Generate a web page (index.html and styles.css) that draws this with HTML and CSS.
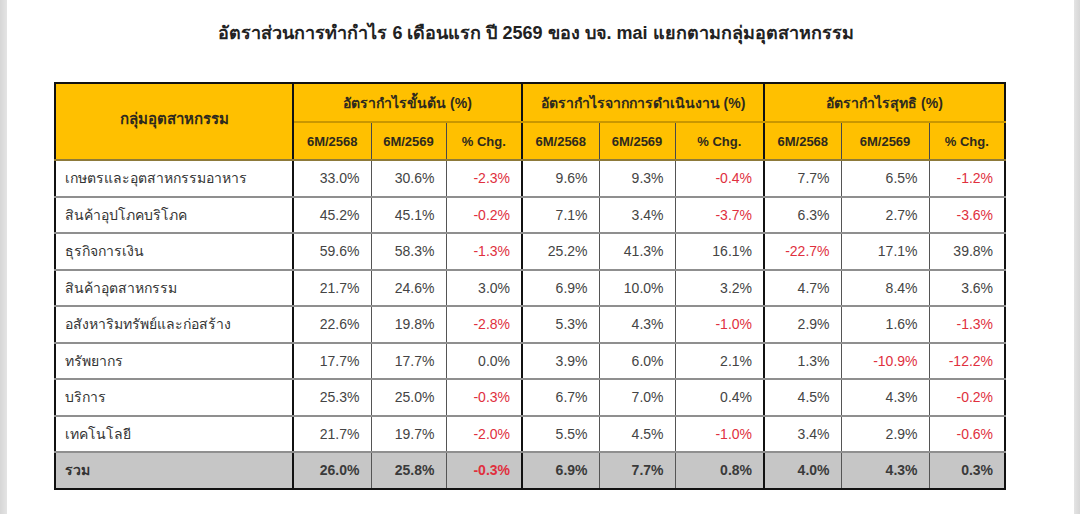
FILE: index.html
```html
<!DOCTYPE html>
<html lang="th">
<head>
<meta charset="utf-8">
<title>อัตราส่วนการทำกำไร</title>
<link rel="stylesheet" href="styles.css">
</head>
<body>
<div class="page">
  <div class="strip strip-left"></div>
  <main class="sheet">
    <h1 class="title">อัตราส่วนการทำกำไร 6 เดือนแรก ปี 2569 ของ บจ. mai แยกตามกลุ่มอุตสาหกรรม</h1>
    <table class="grid">
      <colgroup>
        <col class="c-name"><col class="c-a"><col class="c-b"><col class="c-c">
        <col class="c-d"><col class="c-e"><col class="c-f">
        <col class="c-g"><col class="c-h"><col class="c-i">
      </colgroup>
      <thead>
        <tr class="h1">
          <th rowspan="2" class="name-h g-end">กลุ่มอุตสาหกรรม</th>
          <th colspan="3" class="g-end">อัตรากำไรขั้นต้น (%)</th>
          <th colspan="3" class="g-end">อัตรากำไรจากการดำเนินงาน (%)</th>
          <th colspan="3">อัตรากำไรสุทธิ (%)</th>
        </tr>
        <tr class="h2">
          <th>6M/2568</th><th>6M/2569</th><th class="g-end">% Chg.</th>
          <th>6M/2568</th><th>6M/2569</th><th class="g-end">% Chg.</th>
          <th>6M/2568</th><th>6M/2569</th><th>% Chg.</th>
        </tr>
      </thead>
      <tbody>
        <tr>
          <td class="name g-end">เกษตรและอุตสาหกรรมอาหาร</td>
          <td>33.0%</td><td>30.6%</td><td class="neg g-end">-2.3%</td>
          <td>9.6%</td><td>9.3%</td><td class="neg g-end">-0.4%</td>
          <td>7.7%</td><td>6.5%</td><td class="neg">-1.2%</td>
        </tr>
        <tr>
          <td class="name g-end">สินค้าอุปโภคบริโภค</td>
          <td>45.2%</td><td>45.1%</td><td class="neg g-end">-0.2%</td>
          <td>7.1%</td><td>3.4%</td><td class="neg g-end">-3.7%</td>
          <td>6.3%</td><td>2.7%</td><td class="neg">-3.6%</td>
        </tr>
        <tr>
          <td class="name g-end">ธุรกิจการเงิน</td>
          <td>59.6%</td><td>58.3%</td><td class="neg g-end">-1.3%</td>
          <td>25.2%</td><td>41.3%</td><td class="g-end">16.1%</td>
          <td class="neg">-22.7%</td><td>17.1%</td><td>39.8%</td>
        </tr>
        <tr>
          <td class="name g-end">สินค้าอุตสาหกรรม</td>
          <td>21.7%</td><td>24.6%</td><td class="g-end">3.0%</td>
          <td>6.9%</td><td>10.0%</td><td class="g-end">3.2%</td>
          <td>4.7%</td><td>8.4%</td><td>3.6%</td>
        </tr>
        <tr>
          <td class="name g-end">อสังหาริมทรัพย์และก่อสร้าง</td>
          <td>22.6%</td><td>19.8%</td><td class="neg g-end">-2.8%</td>
          <td>5.3%</td><td>4.3%</td><td class="neg g-end">-1.0%</td>
          <td>2.9%</td><td>1.6%</td><td class="neg">-1.3%</td>
        </tr>
        <tr>
          <td class="name g-end">ทรัพยากร</td>
          <td>17.7%</td><td>17.7%</td><td class="g-end">0.0%</td>
          <td>3.9%</td><td>6.0%</td><td class="g-end">2.1%</td>
          <td>1.3%</td><td class="neg">-10.9%</td><td class="neg">-12.2%</td>
        </tr>
        <tr>
          <td class="name g-end">บริการ</td>
          <td>25.3%</td><td>25.0%</td><td class="neg g-end">-0.3%</td>
          <td>6.7%</td><td>7.0%</td><td class="g-end">0.4%</td>
          <td>4.5%</td><td>4.3%</td><td class="neg">-0.2%</td>
        </tr>
        <tr>
          <td class="name g-end">เทคโนโลยี</td>
          <td>21.7%</td><td>19.7%</td><td class="neg g-end">-2.0%</td>
          <td>5.5%</td><td>4.5%</td><td class="neg g-end">-1.0%</td>
          <td>3.4%</td><td>2.9%</td><td class="neg">-0.6%</td>
        </tr>
        <tr class="total">
          <td class="name g-end">รวม</td>
          <td>26.0%</td><td>25.8%</td><td class="neg g-end">-0.3%</td>
          <td>6.9%</td><td>7.7%</td><td class="g-end">0.8%</td>
          <td>4.0%</td><td>4.3%</td><td>0.3%</td>
        </tr>
      </tbody>
    </table>
  </main>
  <div class="strip strip-right"></div>
</div>
</body>
</html>
```

FILE: styles.css
```css
* { box-sizing: border-box; }

html, body {
  margin: 0;
  padding: 0;
  background: #ffffff;
}

body {
  font-family: "Liberation Sans", Arial, "Noto Sans", sans-serif;
  color: #333333;
}

.page {
  display: flex;
  width: 1080px;
  height: 514px;
  overflow: hidden;
}

.strip {
  flex: 0 0 auto;
  height: 100%;
  background: #dedede;
}

.strip-left {
  width: 7px;
  background: linear-gradient(to right, #d6d6d6, #e4e4e4);
}

.strip-right {
  width: 6px;
  background: linear-gradient(to right, #e4e4e4, #d6d6d6);
}

.sheet {
  flex: 1 1 auto;
  display: flex;
  flex-direction: column;
  padding-top: 21px;
  padding-left: 47px;
}

.title {
  margin: 0;
  height: 61px;
  font-size: 18px;
  font-weight: bold;
  color: #222222;
  text-align: center;
  padding-right: 56px;
  line-height: 24px;
  white-space: nowrap;
}

.grid {
  border-collapse: collapse;
  table-layout: fixed;
  width: 951px;
  border: 2px solid #111111;
}

.c-name { width: 238px; }
.c-a { width: 78px; }
.c-b { width: 75px; }
.c-c { width: 76px; }
.c-d { width: 77px; }
.c-e { width: 76px; }
.c-f { width: 89px; }
.c-g { width: 77px; }
.c-h { width: 88px; }
.c-i { width: 76px; }

.grid th {
  background: #ffc000;
  color: #2e2a1e;
  font-weight: bold;
  text-align: center;
  padding: 0;
  border-left: 1px solid #4a4a4a;
  border-right: 1px solid #4a4a4a;
}

.h1 th {
  height: 39px;
  font-size: 14px;
  border-bottom: 2px solid #c99700;
}

.h2 th {
  height: 38px;
  font-size: 13px;
  border-bottom: 2px solid #8d7a3a;
}

.grid th.name-h {
  font-size: 15px;
  vertical-align: middle;
  padding-bottom: 6px;
  border-bottom: 2px solid #8d7a3a;
}

.grid td {
  height: 36.5px;
  font-size: 14px;
  color: #444444;
  text-align: right;
  padding: 0 11px 0 6px;
  border-left: 1px solid #555555;
  border-right: 1px solid #555555;
  border-bottom: 2px solid #8f8f8f;
}

.grid td.name {
  text-align: left;
  padding-left: 9px;
  color: #333333;
  font-size: 14px;
}

.grid .g-end {
  border-right: 2px solid #111111;
}

.grid td.neg {
  color: #e0303e;
}

.total td {
  background: #c6c6c6;
  font-weight: bold;
  color: #3a3a3a;
  border-bottom: 2px solid #111111;
}

.total td.name {
  color: #333333;
}
```
